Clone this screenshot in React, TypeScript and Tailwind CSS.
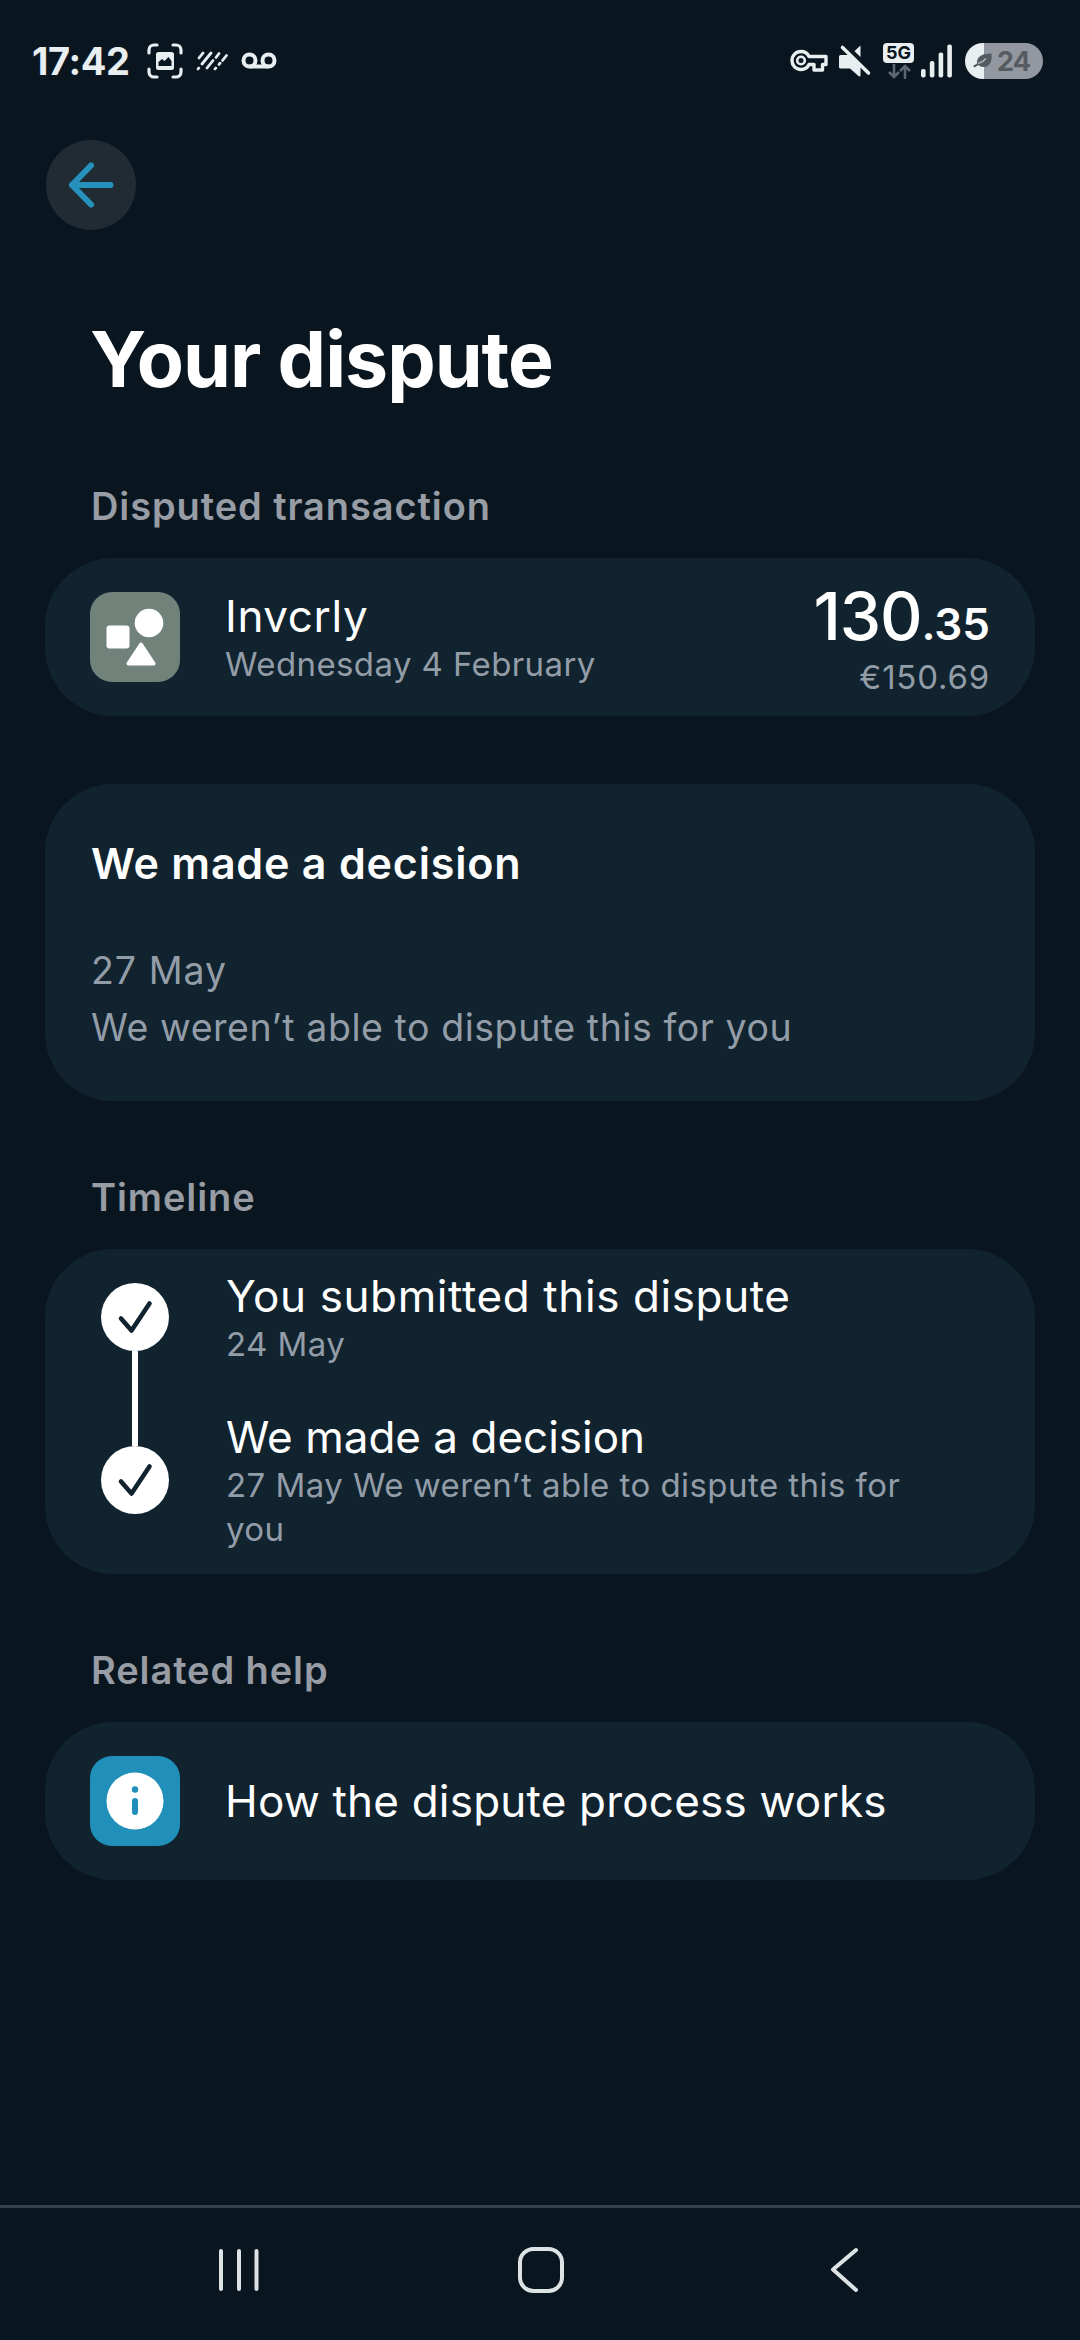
import type { ReactNode } from "react";

interface TimelineStep {
  title: string;
  detail: string;
  wide: boolean; // slightly looser letters on the first row
}

const steps: TimelineStep[] = [
  { title: "You submitted this dispute", detail: "24 May", wide: true },
  { title: "We made a decision", detail: "27 May We weren’t able to dispute this for you", wide: false },
];

function StatusBar() {
  return (
    <div className="flex h-[122px] shrink-0 items-center justify-between pl-[32px] pr-[37px] text-[#e9eef1]">
      <div className="flex items-center">
        <span className="w-[115px] text-[38px] font-bold leading-none tracking-[-0.4px]">17:42</span>
        {/* screenshot */}
        <svg width="36" height="36" viewBox="0 0 36 36" fill="none">
          <path
            d="M2 10V7a5 5 0 0 1 5-5h3M26 2h3a5 5 0 0 1 5 5v3M34 26v3a5 5 0 0 1-5 5h-3M10 34H7a5 5 0 0 1-5-5v-3"
            stroke="currentColor"
            strokeWidth="3.2"
            strokeLinecap="round"
          />
          <rect x="9" y="9" width="18" height="18" rx="2.5" fill="currentColor" />
          <path d="M11.5 23v-4l3.5-3 2.5 2 4-4 3 4v5z" fill="#091620" />
        </svg>
        {/* dashed slashes */}
        <svg className="ml-[13px]" width="32" height="20" viewBox="0 0 32 20" fill="none" stroke="currentColor" strokeWidth="2.8" strokeLinecap="round">
          <path d="M3 7l4-5M2 18l.8-1M6 13l9-11M11 17l6-7.500M20 6.500l3-4M19 18l.8-1M23 13.500l1-1.300M26.500 9.500l4-5" />
        </svg>
        {/* voicemail */}
        <svg className="ml-[13px]" width="36" height="18" viewBox="0 0 36 18" fill="none" stroke="currentColor" strokeWidth="4">
          <circle cx="8.500" cy="8.500" r="6" />
          <circle cx="27.500" cy="8.500" r="6" />
          <path d="M8.500 14.500h19" />
        </svg>
      </div>
      <div className="flex items-center">
        {/* key */}
        <svg width="38" height="24" viewBox="0 0 38 24" fill="none">
          <path
            d="M11 2.500c-5.200 0-9 4-9 9s3.800 9 9 9c3.600 0 6.400-1.600 8-5h5v5.500h8.500v-5.500h3.500v-8H19c-1.600-3.400-4.400-5-8-5z"
            stroke="currentColor"
            strokeWidth="3.4"
            strokeLinejoin="round"
          />
          <circle cx="11" cy="11.500" r="3.800" stroke="currentColor" strokeWidth="2.600" />
        </svg>
        {/* muted speaker */}
        <svg className="ml-[10px]" width="34" height="34" viewBox="0 0 34 34">
          <path d="M15 8.500l7.500-7v17z" fill="currentColor" />
          <path d="M8 2.500l25 24" stroke="#091620" strokeWidth="5" />
          <path d="M2.500 11H11l11.500 11v9.500Q22 33 20.500 32L12 24.500H2.500Q1 24.500 1 23V12.500Q1 11 2.500 11z" fill="currentColor" />
          <path d="M4.500 3.500l26 25.500" stroke="currentColor" strokeWidth="3.600" strokeLinecap="round" />
        </svg>
        <div className="ml-[11px] flex w-[31px] flex-col items-center">
          <span className="flex h-[20px] w-[31px] items-center justify-center rounded-[4px] bg-[#e9eef1] text-[18px] font-bold leading-none text-[#091620]">
            5G
          </span>
          <svg className="mt-[1px]" width="24" height="15" viewBox="0 0 24 15" fill="none" stroke="#5d676f" strokeWidth="2.600">
            <path d="M7 0v13M2 8l5 5 5-5M18 15V2M13 7l5-5 5 5" />
          </svg>
        </div>
        {/* signal */}
        <svg className="ml-[7px]" width="32" height="34" viewBox="0 0 32 34" fill="currentColor">
          <rect x="0" y="25" width="4.600" height="8.500" rx="2" />
          <rect x="8.800" y="17" width="4.600" height="16.500" rx="2" />
          <rect x="17.600" y="8.500" width="4.600" height="25" rx="2" />
          <rect x="26.300" y="0.500" width="4.600" height="33" rx="2" />
        </svg>
        <div className="ml-[12px] flex h-[36px] w-[78px] items-center overflow-hidden rounded-full bg-linear-to-r from-[#e9eef1] from-25% to-[#9297a0] to-25% pl-[8px] text-[#565b61]">
          <svg width="20" height="16" viewBox="0 0 20 16">
            <path d="M18.500 0.500c.8 8-1.500 13.500-8 13.500-2.500 0-4-.8-5-2L1.500 14.500 0 13 4 10.500C3.500 3.500 9 .5 18.500.5z" fill="currentColor" />
            <path d="M5 10.500c3-.8 6-2.500 8-5" stroke="#b4b8be" strokeWidth="1.300" fill="none" />
          </svg>
          <span className="ml-[4px] text-[27px] font-bold leading-none tracking-[-0.8px]">24</span>
        </div>
      </div>
    </div>
  );
}

function SectionTitle({ children }: { children: ReactNode }) {
  return (
    <h2 className="mt-[72px] pl-[46px] text-[38px] font-semibold leading-[48px] tracking-[0.9px] text-[#979ca5]">
      {children}
    </h2>
  );
}

function Check() {
  return (
    <svg width="68" height="68" viewBox="0 0 68 68" fill="none">
      <circle cx="34" cy="34" r="34" fill="#fff" />
      <path d="M20 35.500l10.500 12L48.500 20.500" stroke="#11232f" strokeWidth="4.600" strokeLinecap="round" strokeLinejoin="round" />
    </svg>
  );
}

function NavBar() {
  return (
    <nav className="mt-auto flex h-[135px] items-center border-t-[3px] border-[#343f49] pb-[8px] text-[#dde2e5]">
      <svg className="ml-[217px]" width="44" height="46" viewBox="0 0 44 46" stroke="currentColor" strokeWidth="4" strokeLinecap="round">
        <path d="M4 4v38M22 4v38M39.500 4v38" />
      </svg>
      <svg className="ml-[257px]" width="46" height="46" viewBox="0 0 46 46" fill="none">
        <rect x="2" y="2" width="42" height="42" rx="13.500" stroke="currentColor" strokeWidth="4" />
      </svg>
      <svg className="ml-[266px]" width="30" height="46" viewBox="0 0 30 46" fill="none" stroke="currentColor" strokeWidth="4" strokeLinecap="round" strokeLinejoin="round">
        <path d="M26 3L3 22.500L26 43" />
      </svg>
    </nav>
  );
}

export default function App() {
  return (
    <div className="flex h-[2340px] w-[1080px] flex-col overflow-hidden bg-[#091620] font-['Inter','Roboto',sans-serif] text-white">
      <StatusBar />

      <main className="flex flex-col px-[45px] pt-[18px]">
        <button className="ml-[1px] flex size-[90px] items-center justify-center rounded-full bg-[#202b34]">
          <svg width="46" height="46" viewBox="0 0 46 46" fill="none" stroke="#2691bc" strokeWidth="6" strokeLinecap="round" strokeLinejoin="round">
            <path d="M23 3.500L4 23l19 19.500M4 23h38.500" />
          </svg>
        </button>

        <h1 className="mt-[83px] pl-[45px] text-[77px] font-bold leading-[92px] tracking-[-1px]">Your dispute</h1>

        <div className="mt-[5px]">
          <SectionTitle>Disputed transaction</SectionTitle>
        </div>
        <section className="mt-[28px] flex h-[158px] rounded-[68px] bg-[#11232f] px-[45px]">
          <svg className="mt-[34px]" width="90" height="90" viewBox="0 0 90 90">
            <rect width="90" height="90" rx="22" fill="#71827b" />
            <rect x="16.500" y="33.500" width="23" height="23" rx="3" fill="#fff" />
            <circle cx="59" cy="31" r="14.300" fill="#fff" />
            <path d="M51 52.500L63.500 71.500H38.500z" fill="#fff" stroke="#fff" strokeWidth="4" strokeLinejoin="round" />
          </svg>
          <div className="ml-[45px] flex-1 pt-[33px]">
            <p className="text-[44px] leading-[51px] tracking-[0.6px]">Invcrly</p>
            <p className="text-[33px] leading-[44px] tracking-[0.4px] text-[#939da8]">Wednesday 4 February</p>
          </div>
          <div className="pt-[23px] text-right">
            <p className="text-[66px] font-medium leading-[70px] tracking-[-1.2px]">
              130<span className="text-[44px] font-semibold leading-none tracking-normal">.35</span>
            </p>
            <p className="mt-[4px] text-[33px] leading-[44px] tracking-[0.8px] text-[#939da8]">€150.69</p>
          </div>
        </section>

        <section className="mt-[68px] h-[317px] rounded-[68px] bg-[#11232f] px-[46px] pt-[53px]">
          <h3 className="text-[43px] font-semibold leading-[52px] tracking-[0.8px]">We made a decision</h3>
          <div className="mt-[53px] text-[37.5px] leading-[57px] text-[#939da8]">
            <p className="tracking-[1px]">27 May</p>
            <p className="tracking-[0.55px]">We weren’t able to dispute this for you</p>
          </div>
        </section>

        <SectionTitle>Timeline</SectionTitle>
        <section className="mt-[28px] flex h-[325px] rounded-[68px] bg-[#11232f] pl-[56px] pr-[60px]">
          <div className="flex flex-col items-center pt-[34px]">
            <Check />
            <div className="h-[95px] w-[6px] bg-white" />
            <Check />
          </div>
          <div className="ml-[57px] flex flex-1 flex-col gap-[45px] pt-[22px]">
            {steps.map((step) => (
              <div key={step.title}>
                <p className={step.wide ? "text-[44px] leading-[51px] tracking-[0.6px]" : "text-[44px] leading-[51px]"}>
                  {step.title}
                </p>
                <p className="w-[700px] text-[33px] leading-[44.5px] tracking-[0.45px] text-[#939da8]">{step.detail}</p>
              </div>
            ))}
          </div>
        </section>

        <SectionTitle>Related help</SectionTitle>
        <section className="mt-[28px] flex h-[158px] items-center rounded-[68px] bg-[#11232f] px-[45px]">
          <svg width="90" height="90" viewBox="0 0 90 90">
            <rect width="90" height="90" rx="22" fill="#2090ba" />
            <circle cx="45" cy="45" r="28.500" fill="#fff" />
            <circle cx="45" cy="33.500" r="3.200" fill="#2090ba" />
            <path d="M45 45v11" stroke="#2090ba" strokeWidth="6" strokeLinecap="round" />
          </svg>
          <p className="ml-[45px] text-[44px] leading-[52px] tracking-[0.2px]">How the dispute process works</p>
        </section>
      </main>

      <NavBar />
    </div>
  );
}
